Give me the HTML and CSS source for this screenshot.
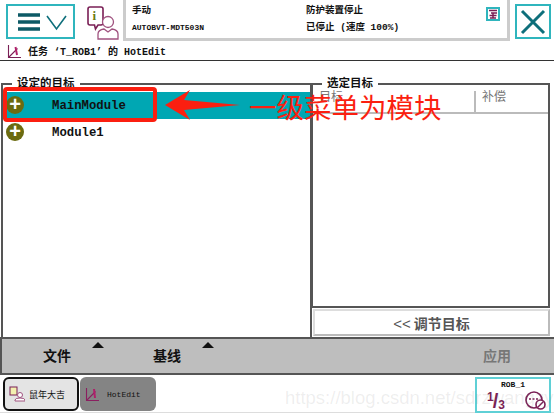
FILE: index.html
```html
<!DOCTYPE html>
<html lang="zh-CN">
<head>
  <meta charset="UTF-8">
  <title>HotEdit</title>
  <link rel="stylesheet" href="styles.css">
</head>
<body>
  <div class="screen">
    <div class="top">
      <button class="menu-btn">
        <svg width="56" height="24" viewBox="0 0 56 24">
          <path d="M5 5h22M5 12h22M5 19h22" stroke="#0c5a66" stroke-width="3.4" fill="none"/>
          <path d="M34 6l9.500 13 9.500-13" stroke="#0e6f7b" stroke-width="1.6" fill="none"/>
        </svg>
      </button>
      <svg class="info-icon" width="32" height="34" viewBox="0 0 32 34">
        <path d="M3 1h11a2 2 0 0 1 2 2v14a2 2 0 0 1-2 2h-3l-2.500 4-1-4H3a2 2 0 0 1-2-2V3a2 2 0 0 1 2-2z" fill="#fff" stroke="#7a1f55" stroke-width="1.6"/>
        <text x="5.500" y="14" class="info-i">i</text>
        <circle cx="21" cy="16" r="5.500" fill="#fff" stroke="#a0527f" stroke-width="1.300"/>
        <path d="M11 33v-5q0-4 6-5l4 3 4-3q6 1 6 5v5z" fill="#fff" stroke="#a0527f" stroke-width="1.300"/>
      </svg>
      <div class="status">
        <div class="status-col col-a">
          <span class="status-cn">手动</span>
          <span>AUTOBVT-MDT503N</span>
        </div>
        <div class="status-col col-b">
          <span class="status-cn">防护装置停止</span>
          <span class="status-cn">已停止 (速度 100%)</span>
        </div>
        <svg class="status-flag" width="14" height="14" viewBox="0 0 14 14">
          <rect x="1" y="1" width="12" height="12" fill="#fff" stroke="#2fb5bd" stroke-width="2"/>
          <path d="M3 3.500h8M5 6h6M3.500 8.500h7M7 6v5M4 11h6" stroke="#7a1f55" stroke-width="1.500" fill="none"/>
        </svg>
      </div>
      <button class="close-btn">
        <svg width="28" height="28" viewBox="0 0 28 28">
          <path d="M3 3l22 22M25 3L3 25" stroke="#0e6f7b" stroke-width="3" fill="none"/>
        </svg>
      </button>
    </div>

    <div class="title">
      <svg width="14" height="16" viewBox="0 0 14 16">
        <path d="M1.500 2v12.500H14M1.500 14.500l9-9" stroke="#7a1f55" stroke-width="1.100" fill="none"/>
        <path d="M8.500 4l1.500 8" stroke="#b0206a" stroke-width="2" fill="none"/>
      </svg>
      <span>任务 ‘T_ROB1’ 的 HotEdit</span>
    </div>

    <div class="main">
      <fieldset class="panel left-panel">
        <legend>设定的目标</legend>
        <div class="row selected">
          <span class="plus">+</span><span class="row-name">MainModule</span>
        </div>
        <div class="row">
          <span class="plus">+</span><span class="row-name">Module1</span>
        </div>
      </fieldset>
      <div class="right-col">
        <fieldset class="panel right-panel">
          <legend>选定目标</legend>
          <div class="table-head">
            <span class="th-a">目标</span>
            <span class="th-b">补偿</span>
          </div>
        </fieldset>
        <button class="adjust-btn"><span class="chev">&lt;&lt;</span> 调节目标</button>
      </div>
    </div>

    <div class="cmd-bar">
      <div class="cmd"><span>文件</span><i class="tri"></i></div>
      <div class="cmd"><span>基线</span><i class="tri"></i></div>
      <div class="apply">应用</div>
    </div>

    <div class="taskbar">
      <div class="task task-active">
        <svg width="16" height="16" viewBox="0 0 16 16">
          <rect x="1" y="1" width="7" height="8" fill="#f3f0b0" stroke="#7a1f55"/>
          <circle cx="11" cy="9" r="2.500" fill="#fff" stroke="#a0527f"/>
          <path d="M6 15v-1q0-2 5-2t5 2v1z" fill="#fff" stroke="#a0527f"/>
        </svg>
        <span>鼠年大吉</span>
      </div>
      <div class="task task-dim">
        <svg width="14" height="16" viewBox="0 0 14 16">
          <path d="M1.500 2v12.500H14M1.500 14.500l9-9" stroke="#8a1f60" stroke-width="1.100" fill="none"/>
          <path d="M9 3l1 9" stroke="#b0206a" stroke-width="2" fill="none"/>
        </svg>
        <span>HotEdit</span>
      </div>
      <div class="rob">
        <span class="rob-name">ROB_1</span>
        <div class="rob-icons">
          <div class="fraction">
            <span class="num">1</span><span class="num-slash">/</span><span class="num num-low">3</span>
          </div>
          <svg width="21" height="19" viewBox="0 0 21 19">
            <circle cx="9" cy="9" r="8" fill="none" stroke="#7a1f55" stroke-width="1.600"/>
            <path d="M4 8h10" stroke="#7a1f55" stroke-width="1.600" stroke-dasharray="2 1.500"/>
            <circle cx="15.500" cy="13.500" r="4.500" fill="#fff" stroke="#7a1f55" stroke-width="1.600"/>
            <path d="M12.500 16.500l6-6" stroke="#7a1f55" stroke-width="1.400"/>
          </svg>
        </div>
      </div>
    </div>

    <!-- annotation drawn over the screenshot -->
    <div class="mark-box"></div>
    <svg class="mark-arrow" width="78" height="32" viewBox="0 0 78 32">
      <path d="M1 16L26 1l-6 10 56 5-56 5 6 10z" fill="#fb1f10"/>
    </svg>
    <div class="mark-text">一级菜单为模块</div>
    <div class="watermark">https://blog.csdn.net/sdrzwangzyanh</div>
  </div>
</body>
</html>
```

FILE: styles.css
```css
* {
  box-sizing: border-box;
}
body {
  margin: 0;
  background: #fff;
  font-family: "Liberation Mono", "Noto Sans CJK SC", monospace;
  color: #111;
}
.screen {
  position: relative;
  width: 554px;
  height: 416px;
  overflow: hidden;
  display: flex;
  flex-direction: column;
  background: #fff;
}
.top {
  height: 41px;
  display: flex;
  align-items: flex-start;
}
.menu-btn {
  width: 69px;
  height: 35px;
  margin: 4px 0 0 6px;
  padding: 0;
  background: #fff;
  border: 2px solid #2fb5bd;
  display: flex;
  align-items: center;
  justify-content: center;
}
.info-icon {
  margin: 6px 0 0 12px;
}
.info-i {
  font-family: "Liberation Serif", serif;
  font-size: 13px;
  font-weight: bold;
  fill: #6b7a10;
}
.status {
  width: 387px;
  height: 41px;
  margin-left: 4px;
  padding: 5px 5px 0 6px;
  border-left: 3px solid #ccc;
  border-right: 3px solid #ccc;
  border-bottom: 3px solid #ccc;
  display: flex;
  font-size: 8px;
  font-weight: bold;
}
.status-col {
  display: flex;
  flex-direction: column;
  gap: 5px;
  line-height: 12px;
}
.status-cn {
  font-size: 9.500px;
}
.col-a {
  width: 174px;
}
.col-b {
  flex: 1;
}
.status-flag {
  margin: 2px 2px 0 0;
}
.close-btn {
  width: 36px;
  height: 35px;
  margin: 4px 0 0 5px;
  padding: 0;
  background: #fff;
  border: 2px solid #2fb5bd;
  display: flex;
  align-items: center;
  justify-content: center;
}
.title {
  height: 20px;
  padding-left: 7px;
  display: flex;
  align-items: center;
  gap: 7px;
  font-size: 10px;
  font-weight: bold;
  border-bottom: 1px solid #333;
}
.main {
  height: 276px;
  padding: 16px 4px 0 1px;
  display: flex;
}
.panel {
  margin: 0;
  padding: 0;
  min-width: 0;
  border: 2px solid #555;
  border-bottom: 0;
}
.panel legend {
  margin-left: 9px;
  padding: 0 5px;
  font-size: 11.500px;
  line-height: 13px;
  font-weight: bold;
}
.left-panel {
  width: 311px;
  height: 260px;
  padding-top: 2px;
}
.row {
  height: 28px;
  display: flex;
  align-items: center;
  font-size: 12.300px;
  font-weight: bold;
}
.selected {
  height: 27px;
  background: #00a7b3;
}
.plus {
  width: 18px;
  height: 18px;
  margin: -2px 0 0 3px;
  border-radius: 50%;
  background: #6b6b10;
  color: #fff;
  font-family: "Liberation Sans", sans-serif;
  font-size: 20px;
  font-weight: bold;
  line-height: 17px;
  text-align: center;
}
.row-name {
  margin-left: 28px;
}
.right-col {
  width: 238px;
  height: 260px;
  display: flex;
  flex-direction: column;
}
.right-panel {
  height: 231px;
  border-left-width: 1px;
  border-bottom: 2px solid #555;
}
.table-head {
  height: 24px;
  padding-top: 1px;
  display: flex;
  border-bottom: 2px solid #bbb;
  font-size: 12px;
  line-height: 14px;
  color: #777;
}
.th-a {
  width: 163px;
  height: 21px;
  padding-left: 6px;
  border-right: 2px solid #bbb;
}
.th-b {
  padding-left: 6px;
}
.adjust-btn {
  height: 27px;
  margin: 1px 0 0 1px;
  padding: 0;
  background: #fff;
  border: 2px solid #ddd;
  border-bottom-color: #bbb;
  border-right-color: #bbb;
  color: #555;
  font-family: "Noto Sans CJK SC", sans-serif;
  font-size: 14px;
  font-weight: bold;
}
.chev {
  font-family: "Liberation Sans", sans-serif;
  font-weight: normal;
  font-size: 15px;
}
.cmd-bar {
  height: 38px;
  padding-bottom: 2px;
  background: #bebebe;
  border-top: 2px solid #555;
  border-bottom: 2px solid #555;
  border-left: 2px solid #555;
  display: flex;
  align-items: center;
  font-family: "Noto Sans CJK SC", sans-serif;
  font-size: 14px;
  font-weight: bold;
}
.cmd {
  width: 110px;
  padding-left: 41px;
  display: flex;
  position: relative;
}
.cmd .tri {
  position: absolute;
  left: 90px;
  top: -3px;
  width: 0;
  height: 0;
  border-left: 6px solid transparent;
  border-right: 6px solid transparent;
  border-bottom: 6px solid #111;
}
.apply {
  margin-left: auto;
  margin-right: 43px;
  color: #777;
}
.taskbar {
  height: 38px;
  padding: 2px 3px 0 3px;
  display: flex;
  gap: 1px;
  border-bottom: 1px solid #ddd;
  font-size: 8px;
}
.task {
  width: 76px;
  height: 34px;
  border-radius: 6px;
  display: flex;
  align-items: center;
  padding-left: 4px;
}
.task-active {
  gap: 4px;
  background: #e4e4e4;
  border: 2px solid #111;
  font-size: 9px;
}
.task-dim {
  gap: 8px;
  background: #848484;
  padding-left: 5px;
}
.rob {
  width: 76px;
  height: 36px;
  margin-left: auto;
  border: 2px solid #5fd0d6;
  display: flex;
  flex-direction: column;
  align-items: center;
}
.rob-name {
  font-size: 8px;
  font-weight: bold;
  line-height: 12px;
}
.rob-icons {
  width: 100%;
  padding: 0 3px 0 10px;
  display: flex;
  justify-content: space-between;
}
.fraction {
  display: flex;
  font-family: "Liberation Sans", sans-serif;
  font-weight: bold;
  color: #7a1f55;
}
.num {
  font-size: 12px;
  line-height: 12px;
}
.num-low {
  padding-top: 8px;
}
.num-slash {
  font-size: 20px;
  line-height: 20px;
  margin: 0 0 0 -1px;
}
.mark-box {
  position: absolute;
  left: 3px;
  top: 87px;
  width: 154px;
  height: 35px;
  border: 4px solid #fb1f10;
  border-radius: 4px;
}
.mark-arrow {
  position: absolute;
  left: 164px;
  top: 89px;
}
.mark-text {
  position: absolute;
  left: 249px;
  top: 88px;
  font-family: "Noto Sans CJK SC", sans-serif;
  font-size: 27.500px;
  line-height: 36px;
  color: #fb1f10;
}
.watermark {
  position: absolute;
  left: 285px;
  top: 387px;
  font-family: "Liberation Sans", sans-serif;
  font-size: 18.500px;
  line-height: 22px;
  white-space: nowrap;
  color: rgba(120, 120, 120, 0.13);
}
```
